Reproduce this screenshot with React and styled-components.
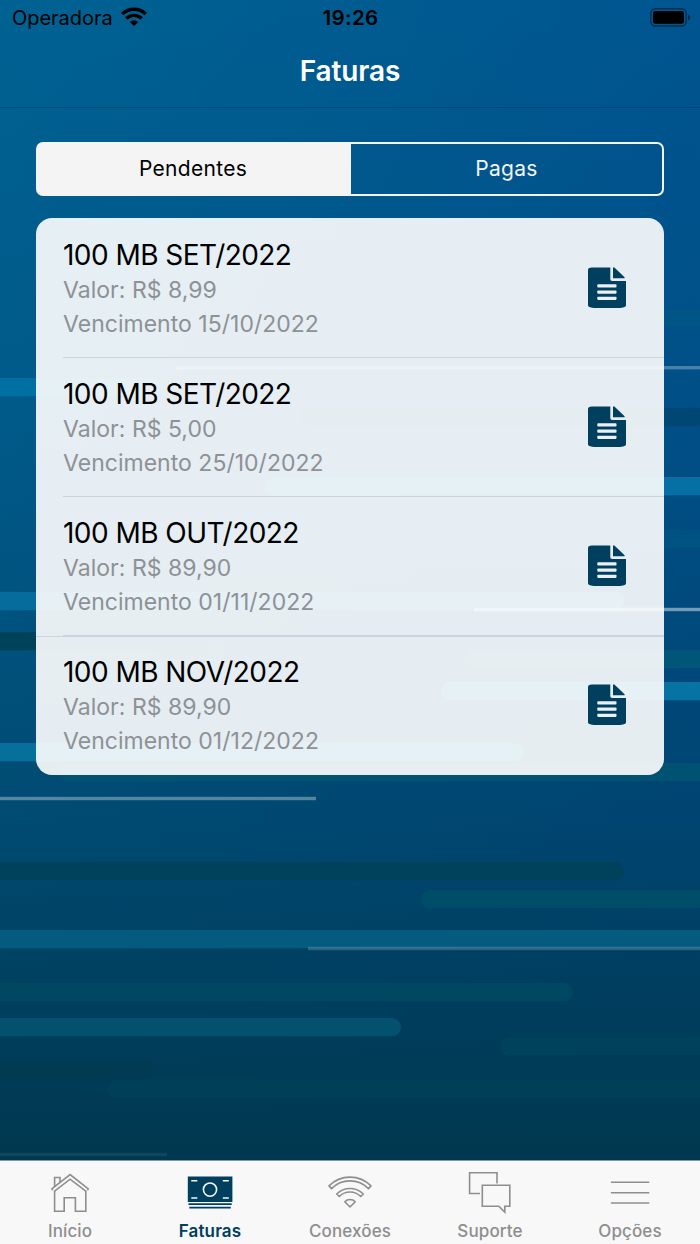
import React from "react";
import styled, { createGlobalStyle } from "styled-components";

const GlobalStyle = createGlobalStyle`
  * { box-sizing: border-box; }
  body { margin: 0; font-family: Inter, "Liberation Sans", sans-serif; }
`;

const Screen = styled.div`
  position: relative;
  display: flex;
  flex-direction: column;
  width: 700px;
  height: 1244px;
  overflow: hidden;
  background: linear-gradient(180deg, rgba(0, 56, 80, 0) 0%, rgba(0, 56, 80, 0.14) 35%, rgba(0, 56, 80, 0.48) 66%, rgba(0, 56, 80, 0.77) 80%, rgb(0, 56, 80) 92%),
    linear-gradient(110deg, #006292 0%, #00508f 85%);
`;

const Backdrop = styled.svg`
  position: absolute;
  top: 0;
  left: 0;
`;

const StatusBar = styled.header`
  position: relative;
  display: grid;
  grid-template-columns: 1fr auto 1fr;
  align-items: center;
  height: 36px;
  padding: 0 9px 2px 12px;
  color: #000;
`;

const Carrier = styled.div`
  display: flex;
  align-items: center;
  gap: 8px;
  font-size: 20px;
  letter-spacing: -0.03px;
`;

const CarrierName = styled.span`
  padding-top: 2px;
`;

const Clock = styled.div`
  font-weight: 600;
  font-size: 20.5px;
  letter-spacing: 0.35px;
  padding-right: 2px;
`;

const BatterySlot = styled.div`
  display: flex;
  justify-content: flex-end;
`;

const NavBar = styled.div`
  position: relative;
  height: 72px;
  border-bottom: 1px solid rgba(0, 30, 60, 0.3);
  display: flex;
  align-items: center;
  justify-content: center;
`;

const Title = styled.h1`
  margin: -1px 0 0;
  color: #fff;
  font-size: 28px;
  line-height: 34px;
  font-weight: 600;
  letter-spacing: -0.1px;
`;

const Content = styled.main`
  position: relative;
  flex: 1;
  padding: 34px 36px 0;
`;

const Segmented = styled.div`
  display: flex;
  height: 54px;
`;

const Segment = styled.button`
  width: ${(p) => (p.$active ? 315 : 313)}px;
  border: 2px solid #f4f4f4;
  border-left-width: ${(p) => (p.$active ? 2 : 0)}px;
  border-right-width: ${(p) => (p.$active ? 0 : 2)}px;
  border-radius: ${(p) => (p.$active ? "7px 0 0 7px" : "0 7px 7px 0")};
  padding: ${(p) => (p.$active ? "0 3px 2px 0" : "0 0 2px")};
  font: 400 21px Inter, "Liberation Sans", sans-serif;
  letter-spacing: 0.3px;
  background: ${(p) => (p.$active ? "#f4f4f4" : "transparent")};
  color: ${(p) => (p.$active ? "#000" : "#f4f4f4")};
`;

const Card = styled.ul`
  list-style: none;
  margin: 22px 0 0;
  padding: 0;
  height: 557px;
  border-radius: 16px;
  overflow: hidden;
  background: rgba(255, 255, 255, 0.9);
`;

const Row = styled.li`
  display: flex;
  align-items: center;
  height: 139px;
  padding-left: 27px;
  margin-top: ${(p) => (p.$last ? "1px" : "0")};
  box-shadow: ${(p) => (p.$last ? "inset 0 1px 0 #c6d7e1" : "none")};
`;

const RowBody = styled.div`
  flex: 1;
  display: flex;
  justify-content: space-between;
  height: 100%;
  padding: ${(p) => (p.$last ? 17 : 18)}px 37px 0 0;
  margin-top: 1px;
  border-bottom: ${(p) => (p.$last ? "0" : "1px solid #ccd5db")};
`;

const Plan = styled.div`
  font-size: 28px;
  line-height: 36px;
  letter-spacing: -0.54px;
  color: #000;
`;

const Detail = styled.div`
  font-size: 23px;
  line-height: 34px;
  letter-spacing: 0.02px;
  color: #8e9195;
`;

const DocSlot = styled.div`
  padding-top: 30.5px;
`;

const TabBar = styled.nav`
  position: relative;
  display: flex;
  height: 84px;
  background: #f8f8f8;
  border-top: 1px solid #7c98a6;
`;

const Tab = styled.div`
  flex: 1;
  display: flex;
  flex-direction: column;
  align-items: center;
  padding-top: 7px;
  color: ${(p) => (p.$active ? "#003f5e" : "#8e8e8e")};
`;

const TabLabel = styled.span`
  font-size: 17px;
  line-height: 22px;
  margin-top: 2px;
  font-weight: ${(p) => (p.$active ? 600 : 500)};
  letter-spacing: 0.12px;
`;

const bands = [
  [400, 309, 320, "#005587"],
  [-20, 378, 180, "#0070a2"],
  [300, 408, 420, "#004873"],
  [265, 477, 460, "#0670a5"],
  [365, 530, 360, "#005280"],
  [-20, 632, 230, "#004259"],
  [-20, 592, 644, "#056c9c"],
  [465, 650, 260, "#005678"],
  [441, 682, 280, "#0673a3"],
  [60, 763, 660, "#005272"],
  [-20, 743, 543, "#05709b"],
  [-20, 862, 644, "#00415b"],
  [421, 890, 300, "#004d69"],
  [-20, 930, 760, "#055a80"],
  [-20, 983, 593, "#004761"],
  [-20, 1018, 421, "#04506f"],
  [500, 1037, 240, "#00425c"],
  [-20, 1061, 173, "#003a53"],
  [107, 1080, 640, "#003f58"],
];

const lines = [
  [176, 366, 524, 0.28],
  [474, 607.8, 226, 0.45],
  [0, 796.8, 316, 0.33],
  [308, 946.8, 392, 0.18],
  [0, 1152.8, 167, 0.07],
];

function Streaks() {
  return (
    <Backdrop width="700" height="1160" viewBox="0 0 700 1160">
      {bands.map(([x, y, w, fill]) => (
        <rect key={y} x={x} y={y + 0.1} width={w} height="18.2" rx="9" fill={fill} />
      ))}
      {lines.map(([x, y, w, o]) => (
        <rect key={y} x={x} y={y} width={w} height="3.4" fill="#fff" fillOpacity={o} />
      ))}
    </Backdrop>
  );
}

function SignalIcon() {
  return (
    <svg width="26" height="20" viewBox="0 0 26 20" fill="none" stroke="#000">
      <path d="M1.2 7.1A17 17 0 0 1 24.8 7.1" strokeWidth="3.5" />
      <path d="M5.3 11.5A11 11 0 0 1 20.7 11.5" strokeWidth="3.4" />
      <path d="M13 18.9L8.8 14.9A6 6 0 0 1 17.2 14.9Z" fill="#000" stroke="none" />
    </svg>
  );
}

function BatteryIcon() {
  return (
    <svg width="41" height="19" viewBox="0 0 41 19">
      <rect x="0.8" y="0.8" width="35.4" height="17.2" rx="4.5" fill="none" stroke="#000" strokeOpacity="0.45" strokeWidth="1.4" />
      <rect x="3" y="3" width="31" height="12.7" rx="2.2" />
      <path d="M38 6.5q2.3 1 2.3 3t-2.3 3z" fillOpacity="0.5" />
    </svg>
  );
}

function DocIcon() {
  return (
    <svg width="39" height="42" viewBox="0 0 39 42" fill="#003f5e">
      <path d="M4 .4H22.3V12.2Q22.3 14 24.1 14H38V38.6Q38 40 35 40.6Q34 41 32 41H6Q4 41 3 40.6Q0 40 0 38.6V2.8Q0 1.4 2 .8Q3 .4 4 .4Z" />
      <path d="M25 .4H26.4L36.6 10.2V11.2H25Z" />
      <g fill="#e9f0f6">
        <rect x="9.3" y="17.3" width="19.2" height="3.2" rx=".8" />
        <rect x="9.3" y="23.5" width="19.2" height="3.2" rx=".8" />
        <rect x="9.3" y="29.7" width="19.2" height="3.2" rx=".8" />
      </g>
    </svg>
  );
}

const TabIcon = ({ children }) => (
  <svg width="50" height="50" viewBox="0 0 50 50" fill="none" stroke="currentColor" strokeWidth="1.6">
    {children}
  </svg>
);

const HomeIcon = () => (
  <TabIcon>
    <path d="M9.6 22.6V43.3H19.2V29.8H30.4V43.3H40.8V22.6" />
    <path d="M6.5 21.2L25.1 6.6L43.6 21.2M9.6 23.1L25.1 11.2L40.8 23.1M6.5 21.2L7.8 22.1M43.6 21.2L42.3 22.1" />
    <path d="M9.6 18.4V9.5H15V13.9" />
  </TabIcon>
);

const MoneyIcon = () => (
  <TabIcon>
    <path d="M2.8 8.6H47.4V34H2.8Z" fill="currentColor" stroke="none" />
    <path d="M3.5 36.2H46.7M4.3 39.7H45.8" strokeWidth="1.8" />
    <g stroke="#f8f8f8" strokeWidth="1.6">
      <circle cx="25" cy="21.6" r="6.6" />
      <path d="M6.3 12.8H12.3M37.8 12.8H43.8M6.3 30H12.3M37.8 30H43.8" />
    </g>
  </TabIcon>
);

const WifiIcon = () => (
  <TabIcon>
    <path d="M4 17.9A29.5 29.5 0 0 1 46 17.9L43.5 20.6A26 26 0 0 0 6.5 20.6Z" strokeLinejoin="round" />
    <path d="M11.7 26A18.7 18.7 0 0 1 38.3 26L35.7 28.5A15.1 15.1 0 0 0 14.3 28.5Z" strokeLinejoin="round" />
    <path d="M19.8 33.7A7.3 7.3 0 0 1 30.2 33.7L25 39Z" strokeLinejoin="round" />
  </TabIcon>
);

const ChatIcon = () => (
  <TabIcon>
    <path d="M15 25.5H4.6V4.7H32V15.4" />
    <path d="M17.3 17.2H44.8V38.2H39.8V44L33.8 38.2H17.3Z" />
  </TabIcon>
);

const MenuIcon = () => (
  <TabIcon>
    <path d="M5.9 14.3H44.3M5.9 24.8H44.3M5.9 35H44.3" />
  </TabIcon>
);

const invoices = [
  ["100 MB SET/2022", "R$ 8,99", "15/10/2022"],
  ["100 MB SET/2022", "R$ 5,00", "25/10/2022"],
  ["100 MB OUT/2022", "R$ 89,90", "01/11/2022"],
  ["100 MB NOV/2022", "R$ 89,90", "01/12/2022"],
];

const tabs = [
  ["Início", HomeIcon],
  ["Faturas", MoneyIcon],
  ["Conexões", WifiIcon],
  ["Suporte", ChatIcon],
  ["Opções", MenuIcon],
];

export default function App() {
  return (
    <Screen>
      <GlobalStyle />
      <Streaks />
      <StatusBar>
        <Carrier>
          <CarrierName>Operadora</CarrierName>
          <SignalIcon />
        </Carrier>
        <Clock>19:26</Clock>
        <BatterySlot>
          <BatteryIcon />
        </BatterySlot>
      </StatusBar>
      <NavBar>
        <Title>Faturas</Title>
      </NavBar>
      <Content>
        <Segmented>
          <Segment $active>Pendentes</Segment>
          <Segment>Pagas</Segment>
        </Segmented>
        <Card>
          {invoices.map(([plan, value, due], i) => {
            const last = i === invoices.length - 1;
            return (
              <Row key={i} $last={last}>
                <RowBody $last={last}>
                  <div>
                    <Plan>{plan}</Plan>
                    <Detail>Valor: {value}</Detail>
                    <Detail>Vencimento {due}</Detail>
                  </div>
                  <DocSlot>
                    <DocIcon />
                  </DocSlot>
                </RowBody>
              </Row>
            );
          })}
        </Card>
      </Content>
      <TabBar>
        {tabs.map(([label, Icon]) => (
          <Tab key={label} $active={label === "Faturas"}>
            <Icon />
            <TabLabel $active={label === "Faturas"}>{label}</TabLabel>
          </Tab>
        ))}
      </TabBar>
    </Screen>
  );
}
